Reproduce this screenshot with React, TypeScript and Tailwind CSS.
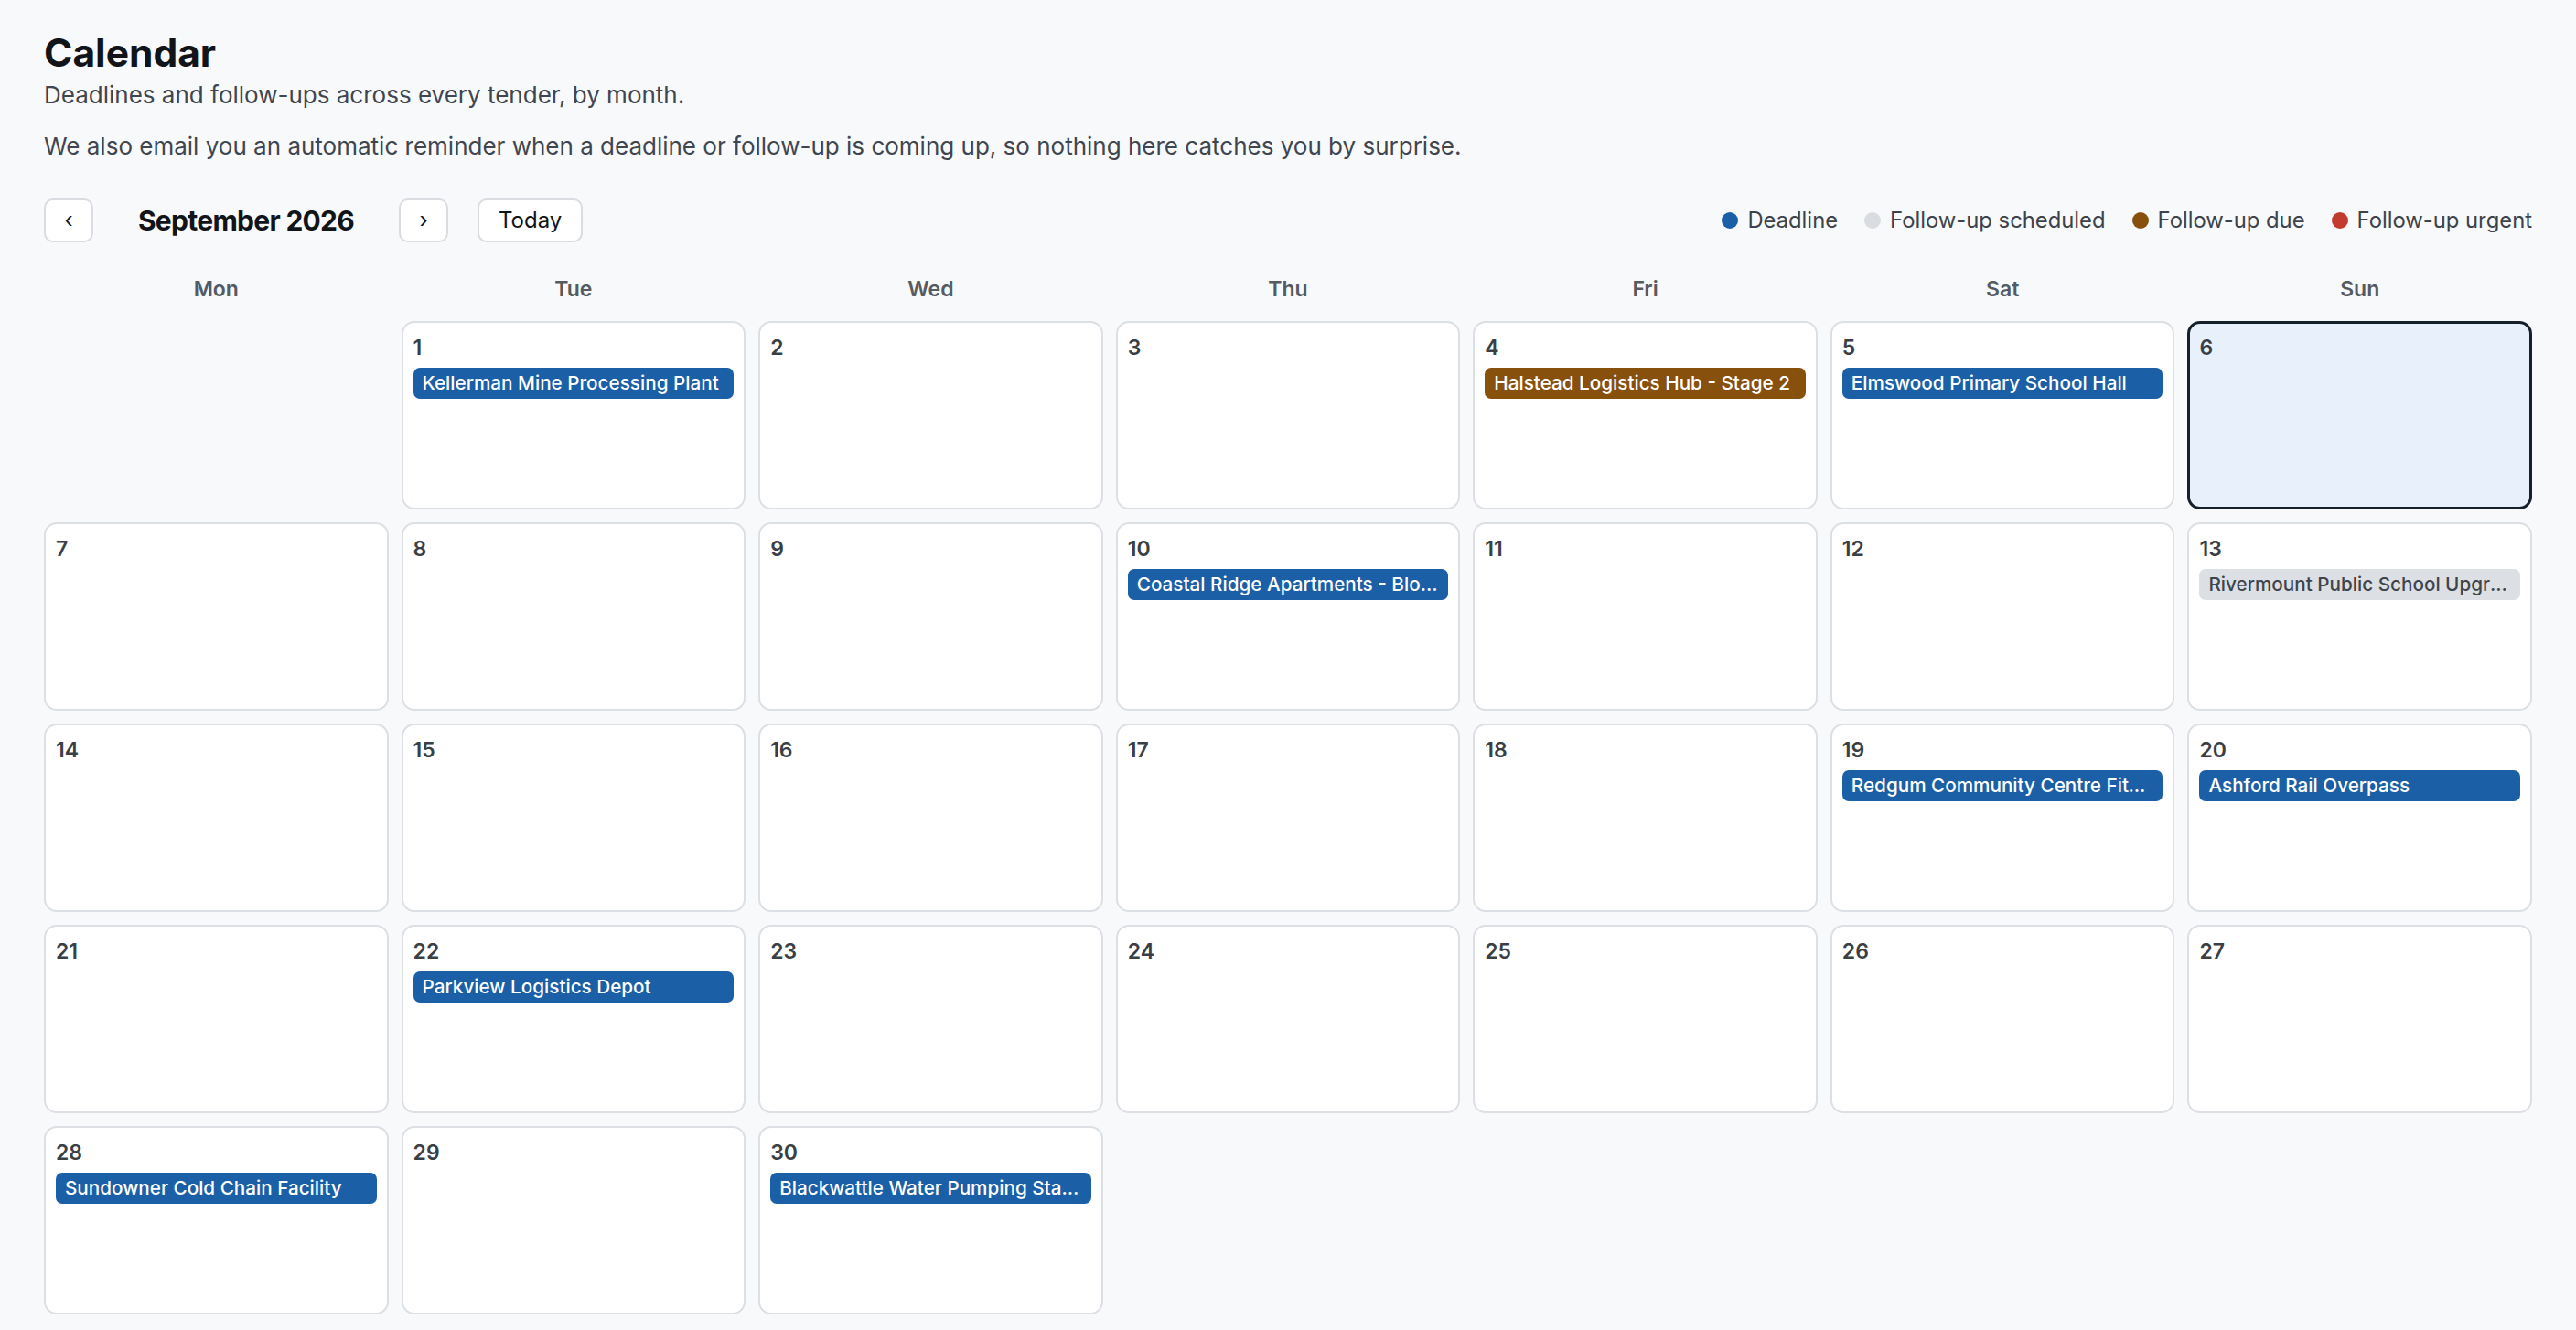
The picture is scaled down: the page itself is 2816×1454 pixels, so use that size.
import React from "react";

type Kind = "deadline" | "scheduled" | "due" | "urgent";

const events: Record<number, { title: string; kind: Kind }[]> = {
  1: [{ title: "Kellerman Mine Processing Plant", kind: "deadline" }],
  4: [{ title: "Halstead Logistics Hub - Stage 2", kind: "due" }],
  5: [{ title: "Elmswood Primary School Hall", kind: "deadline" }],
  10: [{ title: "Coastal Ridge Apartments - Block B", kind: "deadline" }],
  13: [{ title: "Rivermount Public School Upgrade", kind: "scheduled" }],
  19: [{ title: "Redgum Community Centre Fit-out", kind: "deadline" }],
  20: [{ title: "Ashford Rail Overpass", kind: "deadline" }],
  22: [{ title: "Parkview Logistics Depot", kind: "deadline" }],
  28: [{ title: "Sundowner Cold Chain Facility", kind: "deadline" }],
  30: [{ title: "Blackwattle Water Pumping Station", kind: "deadline" }],
};

const pillClass: Record<Kind, string> = {
  deadline: "bg-[#1b5fa6] text-white",
  scheduled: "bg-[#dcdfe3] text-[#3e444b]",
  due: "bg-[#87500c] text-white",
  urgent: "bg-[#c23b2e] text-white",
};

const days = ["Mon", "Tue", "Wed", "Thu", "Fri", "Sat", "Sun"];

function Legend() {
  const items: { label: string; color: string }[] = [
    { label: "Deadline", color: "bg-[#1b5fa6]" },
    { label: "Follow-up scheduled", color: "bg-[#d9dce0]" },
    { label: "Follow-up due", color: "bg-[#87500c]" },
    { label: "Follow-up urgent", color: "bg-[#c23b2e]" },
  ];
  return (
    <div className="ml-auto flex items-center gap-[29px]">
      {items.map((it) => (
        <div key={it.label} className="flex items-center gap-[10px]">
          <span className={`inline-block h-[18px] w-[18px] rounded-full ${it.color}`} />
          <span className="text-[23.8px] leading-[34px] text-[#3d434b]">{it.label}</span>
        </div>
      ))}
    </div>
  );
}

function DayCell({ day }: { day: number }) {
  const isToday = day === 6;
  const evs = events[day] || [];
  return (
    <div
      className={
        isToday
          ? "h-[206px] rounded-[14px] border-[3px] border-[#16202b] bg-[#e8f1fb] pl-[10px] pr-[10px] pt-[13px]"
          : "h-[206px] rounded-[14px] border-2 border-[#dcdfe4] bg-white pl-[11px] pr-[11px] pt-[14px]"
      }
    >
      <div className="text-[23px] font-semibold leading-[26px] text-[#3a3f45]">{day}</div>
      <div className="mt-[9px] flex flex-col gap-[6px]">
        {evs.map((e) => (
          <div
            key={e.title}
            className={`h-[34px] truncate rounded-[7px] px-[10px] text-[20.7px] font-medium leading-[34px] ${pillClass[e.kind]}`}
          >
            {e.title}
          </div>
        ))}
      </div>
    </div>
  );
}

export default function App() {
  const cells: (number | null)[] = [null];
  for (let d = 1; d <= 30; d++) cells.push(d);

  return (
    <div
      className="min-h-screen bg-[#f8f9fb] px-[48px] pt-[33px] pb-[20px] text-[#111418]"
      style={{ fontFamily: "Inter, 'Noto Sans', sans-serif" }}
    >
      <h1 className="text-[42.5px] font-bold leading-[50px] text-[#111418]">Calendar</h1>
      <p className="mt-[4px] text-[26px] leading-[34px] text-[#3f4650]">
        Deadlines and follow-ups across every tender, by month.
      </p>
      <p className="mt-[22px] text-[26px] leading-[34px] text-[#3f4650]">
        We also email you an automatic reminder when a deadline or follow-up is coming up, so nothing here catches you by surprise.
      </p>

      <div className="mt-[40px] flex h-[48px] items-center">
        <button className="flex h-[48px] w-[54px] items-center justify-center rounded-[10px] border-2 border-[#d9dce0] bg-white text-[24px] text-[#111418]">
          ‹
        </button>
        <div className="ml-[14px] w-[306px] text-center text-[30px] font-bold leading-[40px] tracking-[-0.7px] text-[#111418]">
          September 2026
        </div>
        <button className="ml-[14px] flex h-[48px] w-[54px] items-center justify-center rounded-[10px] border-2 border-[#d9dce0] bg-white text-[24px] text-[#111418]">
          ›
        </button>
        <button className="ml-[32px] flex h-[48px] items-center rounded-[10px] border-2 border-[#d9dce0] bg-white px-[21px] text-[24px] text-[#111418]">
          Today
        </button>
        <Legend />
      </div>

      <div className="mt-[35px] grid grid-cols-7 gap-[14px]">
        {days.map((d) => (
          <div key={d} className="text-center text-[23px] font-semibold leading-[32px] text-[#555b63]">
            {d}
          </div>
        ))}
      </div>

      <div className="mt-[19px] grid grid-cols-7 gap-[14px]">
        {cells.map((d, i) => (d === null ? <div key={`e${i}`} /> : <DayCell key={d} day={d} />))}
      </div>
    </div>
  );
}
